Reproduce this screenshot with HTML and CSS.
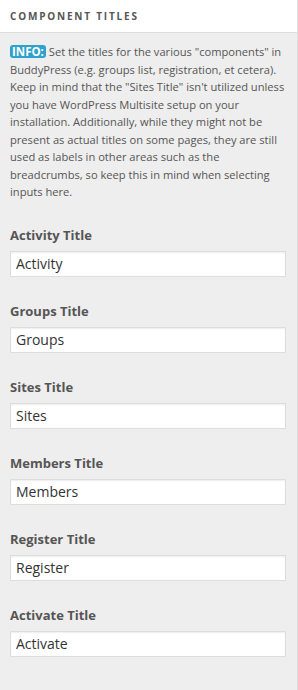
FILE: index.html
```html
<!DOCTYPE html>
<html lang="en">
<head>
  <meta charset="UTF-8" />
  <meta name="viewport" content="width=device-width, initial-scale=1.0"/>
  <title>Component Titles</title>
  <link rel="stylesheet" href="styles.css">
</head>
<body>
  <div class="panel">
    <div class="panel-head">Component Titles</div>

    <div class="panel-body">
      <p class="desc">
        <span class="badge">INFO:</span> Set the titles for the various "components" in BuddyPress (e.g. groups list, registration, et cetera). Keep in mind that the "Sites Title" isn't utilized unless you have WordPress Multisite setup on your installation. Additionally, while they might not be present as actual titles on some pages, they are still used as labels in other areas such as the breadcrumbs, so keep this in mind when selecting inputs here.
      </p>

      <div class="field">
        <label for="activity">Activity Title</label>
        <input type="text" id="activity" value="Activity" />
      </div>

      <div class="field">
        <label for="groups">Groups Title</label>
        <input type="text" id="groups" value="Groups" />
      </div>

      <div class="field">
        <label for="sites">Sites Title</label>
        <input type="text" id="sites" value="Sites" />
      </div>

      <div class="field">
        <label for="members">Members Title</label>
        <input type="text" id="members" value="Members" />
      </div>

      <div class="field">
        <label for="register">Register Title</label>
        <input type="text" id="register" value="Register" />
      </div>

      <div class="field">
        <label for="activate">Activate Title</label>
        <input type="text" id="activate" value="Activate" />
      </div>
    </div>
  </div>
</body>
</html>
```

FILE: styles.css
```css
body {
  margin: 0;
  font-family: 'Open Sans', sans-serif;
  background-color: #eee;
  color: #555;
}

.panel {
  width: 297px;
  min-height: 690px;
  border-right: 1px solid #ddd;
  background-color: #eee;
}

.panel-head {
  height: 32px;
  line-height: 32px;
  padding: 0 10px;
  background-color: #fff;
  border-bottom: 1px solid #ddd;
  font-size: 10px;
  font-weight: bold;
  text-transform: uppercase;
  letter-spacing: 1.8px;
  color: #555;
}

.panel-body {
  padding: 10px 10px 0;
}

.desc {
  margin: 0 0 24px;
  font-size: 11.15px;
  line-height: 17.5px;
  color: #555;
}

.badge {
  display: inline-block;
  padding: 0 2px;
  line-height: 13px;
  border-radius: 3px;
  background-color: #2ea2cc;
  color: #fff;
  font-size: 11.5px;
  font-weight: bold;
}

.field {
  margin-bottom: 24px;
}

.field label {
  display: block;
  font-size: 13px;
  line-height: 20px;
  font-weight: bold;
  margin-bottom: 6px;
}

.field input {
  display: block;
  box-sizing: border-box;
  width: 276px;
  height: 26px;
  padding: 0 5px;
  border: 1px solid #ddd;
  box-shadow: inset 0 1px 2px rgba(0,0,0,0.07);
  background-color: #fff;
  font-family: 'Open Sans', sans-serif;
  font-size: 14px;
  color: #333;
}
```
